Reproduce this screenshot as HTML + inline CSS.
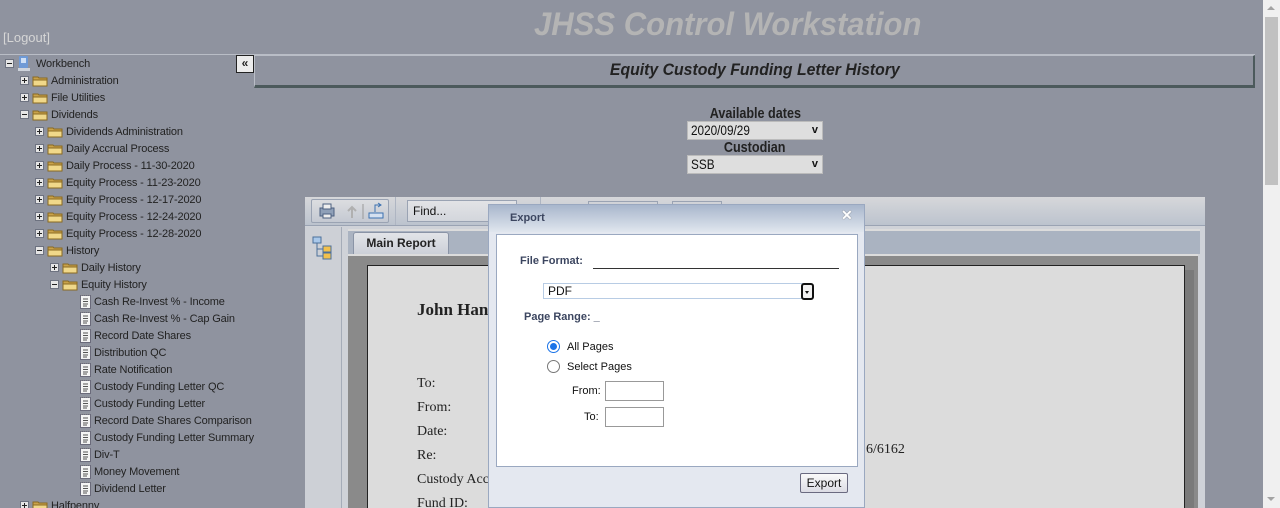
<!DOCTYPE html>
<html><head><meta charset="utf-8">
<style>
*{margin:0;padding:0;box-sizing:border-box}
html,body{width:1280px;height:508px;overflow:hidden}
body{background:#8f939f;font-family:"Liberation Sans",sans-serif;position:relative}
.a{position:absolute}
.row{position:absolute;height:17px;font-size:11px;color:#222;line-height:19px;white-space:nowrap;font-family:"Liberation Sans",sans-serif;letter-spacing:-0.15px}
.bx{position:absolute;top:4px;width:9px;height:9px;border:1px solid #6d7280;background:#e6e6e6}
.bx:before{content:"";position:absolute;left:1px;top:3px;width:5px;height:1px;background:#222}
.bx.p:after{content:"";position:absolute;left:3px;top:1px;width:1px;height:5px;background:#222}
.fd{position:absolute;top:3px;width:16px;height:12px}
.dc{position:absolute;top:1px;width:11px;height:15px}
.lbl{position:absolute;top:0}
.cx{display:inline-block;transform:scaleX(0.84);transform-origin:center}
</style></head><body>

<div class="a" style="left:0;top:6px;width:1455px;text-align:center;font-size:32px;font-weight:bold;font-style:italic;color:#b4b4b4"><span class="cx" style="transform:scaleX(0.97)">JHSS Control Workstation</span></div>
<div class="a" style="left:3px;top:30px;font-size:13px;color:#d6d6d6">[Logout]</div>
<div class="a" style="left:0;top:54px;width:1255px;height:1px;background:#b9bdc6"></div>

<div class="a" style="left:1263px;top:0;width:17px;height:508px;background:#f0f0f0"></div>
<div class="a" style="left:1265px;top:17px;width:13px;height:168px;background:#c1c1c1"></div>
<div class="a" style="left:1267px;top:6px;width:0;height:0;border:4px solid transparent;border-bottom:4px solid #a3a3a3;border-top:0"></div>
<div class="a" style="left:1267px;top:497px;width:0;height:0;border:4px solid transparent;border-top:4px solid #a3a3a3;border-bottom:0"></div>

<svg width="0" height="0" style="position:absolute"><defs>
<symbol id="f" viewBox="0 0 16 12"><path d="M1 2h5l1 1h8v8H1z" fill="#c9a24a" stroke="#8a6a22"/><path d="M1 5h14v6H1z" fill="#f0d88a" stroke="#8a6a22"/></symbol>
<symbol id="d" viewBox="0 0 11 15"><rect x="0.5" y="1.5" width="10" height="13" fill="#f4f4f4" stroke="#6a6a7a"/><path d="M3 5h5M3 7.5h5M3 10h5M3 12h4" stroke="#555" /><path d="M1 1h9" stroke="#999" stroke-dasharray="1 1"/></symbol>
</defs></svg>

<div class="row" style="left:0;top:55px"><div class="bx" style="left:5px"></div>
<svg class="a" style="left:17px;top:0" width="14" height="17"><rect x="2" y="1" width="9" height="12" rx="1" fill="#6f9ad6"/><rect x="4" y="3" width="5" height="5" fill="#cfe0f6"/><rect x="1" y="13" width="12" height="3" fill="#cfd4dc"/></svg>
<span class="lbl" style="left:36px">Workbench</span></div>

<div id="tree"></div>
<script>
var rows=[
[1,'p','Administration'],[1,'p','File Utilities'],[1,'m','Dividends'],
[2,'p','Dividends Administration'],[2,'p','Daily Accrual Process'],[2,'p','Daily Process - 11-30-2020'],
[2,'p','Equity Process - 11-23-2020'],[2,'p','Equity Process - 12-17-2020'],[2,'p','Equity Process - 12-24-2020'],
[2,'p','Equity Process - 12-28-2020'],[2,'m','History'],[3,'p','Daily History'],[3,'m','Equity History'],
[4,'d','Cash Re-Invest % - Income'],[4,'d','Cash Re-Invest % - Cap Gain'],[4,'d','Record Date Shares'],
[4,'d','Distribution QC'],[4,'d','Rate Notification'],[4,'d','Custody Funding Letter QC'],[4,'d','Custody Funding Letter'],
[4,'d','Record Date Shares Comparison'],[4,'d','Custody Funding Letter Summary'],[4,'d','Div-T'],
[4,'d','Money Movement'],[4,'d','Dividend Letter'],[1,'p','Halfpenny']];
var h='';
rows.forEach(function(r,i){
 var top=72+i*17, L=r[0];
 if(r[1]=='d'){
  h+='<div class="row" style="left:0;top:'+top+'px"><svg class="dc" style="left:80px"><use href="#d"/></svg><span class="lbl" style="left:94px">'+r[2]+'</span></div>';
 } else {
  var bx=20+(L-1)*15, fx=bx+12, tx=bx+31;
  h+='<div class="row" style="left:0;top:'+top+'px"><div class="bx'+(r[1]=='p'?' p':'')+'" style="left:'+bx+'px"></div><svg class="fd" style="left:'+fx+'px"><use href="#f"/></svg><span class="lbl" style="left:'+tx+'px">'+r[2]+'</span></div>';
 }
});
document.getElementById('tree').innerHTML=h;
</script>

<div class="a" style="left:236px;top:55px;width:18px;height:18px;background:#ececec;border:1px solid #222;font-size:12px;font-weight:bold;line-height:15px;text-align:center;color:#222">«</div>

<div class="a" style="left:254px;top:55px;width:1001px;height:33px;border-left:1px solid #b9bdc6;border-top:1px solid #b9bdc6;border-right:2px solid #4c5a5c;border-bottom:3px solid #4c5a5c"></div>
<div class="a" style="left:254px;top:60px;width:1001px;text-align:center;font-size:17px;font-weight:bold;font-style:italic;color:#222"><span class="cx" style="transform:scaleX(0.93)">Equity Custody Funding Letter History</span></div>

<div class="a" style="left:655px;top:105px;width:200px;text-align:center;font-size:15px;font-weight:bold;color:#222"><span class="cx">Available dates</span></div>
<div class="a" style="left:687px;top:121px;width:136px;height:19px;background:#dedede;border:1px solid #bbb;font-size:14px;line-height:17px;padding-left:3px;color:#111"><span class="cx" style="transform-origin:left">2020/09/29</span><span style="position:absolute;right:4px;top:0;font-size:11px;font-weight:bold">v</span></div>
<div class="a" style="left:655px;top:139px;width:200px;text-align:center;font-size:15px;font-weight:bold;color:#222"><span class="cx">Custodian</span></div>
<div class="a" style="left:687px;top:155px;width:136px;height:19px;background:#dedede;border:1px solid #bbb;font-size:14px;line-height:17px;padding-left:3px;color:#111"><span class="cx" style="transform-origin:left">SSB</span><span style="position:absolute;right:4px;top:0;font-size:11px;font-weight:bold">v</span></div>

<div class="a" style="left:305px;top:197px;width:900px;height:311px;background:#cfd2d8"></div>
<div class="a" style="left:305px;top:197px;width:900px;height:29px;background:linear-gradient(#d6d7da,#bcc3ce);border-bottom:1px solid #9aa3b3"></div>
<div class="a" style="left:311px;top:199px;width:78px;height:24px;border:1px solid #9aa3b3;border-radius:2px;background:linear-gradient(#dcdde0,#c4c9d2)"></div>
<svg class="a" style="left:318px;top:202px" width="70" height="18"><rect x="2" y="6" width="14" height="8" fill="#8fa0b8" stroke="#4c6080"/><rect x="5" y="2" width="8" height="5" fill="#eee" stroke="#4c6080"/><rect x="5" y="12" width="8" height="4" fill="#eee" stroke="#4c6080"/><path d="M34 16V6M30 9l4-4 4 4" stroke="#b0b0b0" stroke-width="2" fill="none"/><path d="M45 2v15" stroke="#999"/><path d="M51 11h14v5H51z" fill="#d4e0f0" stroke="#3a70b0"/><path d="M57 10V3h6M60 1l3 2-3 2" stroke="#3a70b0" fill="none"/></svg>
<div class="a" style="left:395px;top:197px;width:1px;height:28px;background:#aeb5c2"></div>
<div class="a" style="left:407px;top:200px;width:110px;height:22px;border:1px solid #9aa3b3;background:linear-gradient(#e2e3e6,#d3d6dc);font-size:12px;line-height:20px;padding-left:5px;color:#111">Find...</div>
<div class="a" style="left:540px;top:197px;width:1px;height:28px;background:#aeb5c2"></div>
<div class="a" style="left:588px;top:201px;width:70px;height:4px;border:1px solid #9aa3b3;border-bottom:0"></div>
<div class="a" style="left:672px;top:201px;width:50px;height:4px;border:1px solid #9aa3b3;border-bottom:0"></div>

<div class="a" style="left:305px;top:227px;width:37px;height:281px;background:#cdd0d6;border-right:1px solid #a5acb8"></div>
<svg class="a" style="left:312px;top:236px" width="22" height="24"><rect x="1" y="1" width="8" height="6" fill="#a9c8ea" stroke="#4c6f9a"/><path d="M5 7v13h6M5 13h6" stroke="#4c6f9a" fill="none"/><rect x="11" y="10" width="8" height="6" fill="#f2c04c" stroke="#4c6f9a"/><rect x="11" y="17" width="8" height="6" fill="#f2c04c" stroke="#4c6f9a"/></svg>
<div class="a" style="left:348px;top:229px;width:852px;height:25px;background:#aab3c1;border-top:2px solid #dcdcdc"></div>
<div class="a" style="left:353px;top:232px;width:96px;height:22px;background:linear-gradient(#e2e4e8,#ccd0d8);border:1px solid #8a94a6;border-bottom:0;border-radius:3px 3px 0 0;font-size:12px;font-weight:bold;text-align:center;line-height:20px;color:#222">Main Report</div>
<div class="a" style="left:348px;top:254px;width:852px;height:254px;background:#8a8a8a;border-top:2px solid #dcdcdc"></div>
<div class="a" style="left:1198px;top:254px;width:7px;height:254px;background:#cfd2d8"></div>
<div class="a" style="left:1184px;top:270px;width:10px;height:238px;background:#7a7a7a"></div>
<div class="a" style="left:367px;top:265px;width:818px;height:243px;background:#dcdcdc;border:1px solid #222;border-bottom:0"></div>
<div class="a" style="left:417px;top:300px;font-family:'Liberation Serif',serif;font-size:17px;font-weight:bold;color:#222">John Hancock</div>
<div class="a" style="left:417px;top:372px;font-family:'Liberation Serif',serif;font-size:14px;line-height:24px;color:#222">To:<br>From:<br>Date:<br>Re:<br>Custody Account<br>Fund ID:</div>
<div class="a" style="left:866px;top:442px;font-family:'Liberation Serif',serif;font-size:14px;color:#222">6/6162</div>

<div class="a" style="left:488px;top:204px;width:377px;height:304px;background:#e4e8f0;border:1px solid #9aa8c0"></div>
<div class="a" style="left:489px;top:205px;width:375px;height:27px;background:linear-gradient(#a8b6cc,#e0e6ee)"></div>
<div class="a" style="left:510px;top:210px;font-size:11px;font-weight:bold;color:#3c4660;line-height:16px">Export</div>
<div class="a" style="left:841px;top:207px;font-size:14px;color:#fff;font-weight:bold;text-shadow:0 0 1px #555">✕</div>
<div class="a" style="left:496px;top:234px;width:362px;height:233px;background:#fff;border:1px solid #9aa8c0"></div>
<div class="a" style="left:520px;top:255px;font-size:11px;font-weight:bold;color:#3c4660">File Format:</div>
<div class="a" style="left:593px;top:268px;width:246px;height:1px;background:#333"></div>
<div class="a" style="left:543px;top:283px;width:263px;height:16px;border:1px solid #b8cce4;font-size:12px;line-height:14px;padding-left:4px;color:#111">PDF</div>
<div class="a" style="left:801px;top:283px;width:13px;height:17px;border:2px solid #111;border-radius:3px;background:#f2f2f2"><div style="position:absolute;left:2px;top:6px;border:2.5px solid transparent;border-top:3px solid #111;border-bottom:0"></div></div>
<div class="a" style="left:524px;top:311px;font-size:11px;font-weight:bold;color:#3c4660">Page Range: _</div>
<div class="a" style="left:547px;top:340px;width:13px;height:13px;border-radius:50%;border:1px solid #1a73e8;background:#fff"><div style="position:absolute;left:2px;top:2px;width:7px;height:7px;border-radius:50%;background:#1a73e8"></div></div>
<div class="a" style="left:567px;top:341px;font-size:11px;color:#111">All Pages</div>
<div class="a" style="left:547px;top:360px;width:13px;height:13px;border-radius:50%;border:1px solid #777;background:#fff"></div>
<div class="a" style="left:567px;top:361px;font-size:11px;color:#111">Select Pages</div>
<div class="a" style="left:572px;top:385px;font-size:11px;color:#111">From:</div>
<div class="a" style="left:605px;top:381px;width:59px;height:20px;border:1px solid #999;background:#fff"></div>
<div class="a" style="left:584px;top:411px;font-size:11px;color:#111">To:</div>
<div class="a" style="left:605px;top:407px;width:59px;height:20px;border:1px solid #999;background:#fff"></div>
<div class="a" style="left:800px;top:473px;width:48px;height:20px;border:1px solid #6a6a80;border-radius:2px;background:linear-gradient(#fafafa,#dcdce4);font-size:12px;line-height:18px;text-align:center;color:#111">Export</div>

</body></html>
